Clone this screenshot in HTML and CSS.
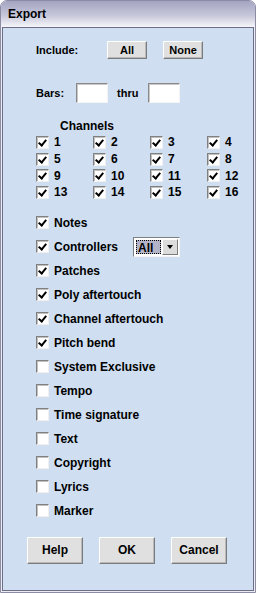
FILE: index.html
```html
<!DOCTYPE html>
<html lang="en">
<head>
    <meta charset="UTF-8">
    <title>Export</title>
    <link rel="stylesheet" href="styles.css">
</head>
<body>

<div class="window">
    <div class="titlebar">Export</div>

    <div class="panel">
        <div class="row include-row">
            <span class="label">Include:</span>
            <button class="btn small">All</button>
            <button class="btn small">None</button>
        </div>

        <div class="row bars-row">
            <span class="label">Bars:</span>
            <input class="field" type="text">
            <span class="label thru">thru</span>
            <input class="field" type="text">
        </div>

        <div class="channels-title">Channels</div>
        <div class="channels" id="channels"></div>

        <div class="options">
            <label class="check"><span class="box on"></span>Notes</label>
            <label class="check"><span class="box on"></span>Controllers
                <span class="combo"><span class="combo-value"><span class="combo-sel">All</span></span><span class="combo-arrow"></span></span>
            </label>
            <label class="check"><span class="box on"></span>Patches</label>
            <label class="check"><span class="box on"></span>Poly aftertouch</label>
            <label class="check"><span class="box on"></span>Channel aftertouch</label>
            <label class="check"><span class="box on"></span>Pitch bend</label>
            <label class="check"><span class="box"></span>System Exclusive</label>
            <label class="check"><span class="box"></span>Tempo</label>
            <label class="check"><span class="box"></span>Time signature</label>
            <label class="check"><span class="box"></span>Text</label>
            <label class="check"><span class="box"></span>Copyright</label>
            <label class="check"><span class="box"></span>Lyrics</label>
            <label class="check"><span class="box"></span>Marker</label>
        </div>

        <div class="actions">
            <button class="btn big">Help</button>
            <button class="btn big">OK</button>
            <button class="btn big">Cancel</button>
        </div>
    </div>
</div>

<script>
    // canales 1..16, todos marcados
    const grid = document.getElementById('channels');
    for (let i = 1; i <= 16; i++) {
        const item = document.createElement('label');
        item.className = 'check';
        item.innerHTML = `<span class="box on"></span>${i}`;
        grid.appendChild(item);
    }
</script>
</body>
</html>
```

FILE: styles.css
```css
body {
    margin: 0;
    background: #ffffff;
    font-family: 'Liberation Sans', Arial, sans-serif;
    font-size: 11px;
    font-weight: bold;
    color: #000;
}

.window {
    width: 256px;
    height: 593px;
    box-sizing: border-box;
    border: 1px solid #8c8ca4;
    border-radius: 7px 7px 0 0;
    background: #ececf2;
    display: flex;
    flex-direction: column;
    overflow: hidden;
}

.titlebar {
    height: 26px;
    box-sizing: border-box;
    padding: 6px 0 0 7px;
    font-size: 12px;
    background: linear-gradient(#a4a4c2, #c6c6da 55%, #f6f6fa);
}

.panel {
    flex: 1;
    margin: 0 1px 1px 1px;
    border: 1px solid #6e6e88;
    background: #cfdef0;
    padding: 0 0 0 33px;
    display: flex;
    flex-direction: column;
}

.row {
    display: flex;
    align-items: center;
}

.include-row {
    margin-top: 13px;
    height: 18px;
}

.include-row .label {
    width: 71px;
}

.include-row .btn + .btn {
    margin-left: 16px;
}

.bars-row {
    margin-top: 24px;
    height: 20px;
}

.bars-row .label {
    width: 40px;
}

.bars-row .thru {
    width: 31px;
    margin-left: 9px;
}

.field {
    width: 32px;
    height: 20px;
    box-sizing: border-box;
    margin: 0;
    padding: 0;
    background: #fff;
    border: 1px solid;
    border-color: #8a8a8a #f4f4f4 #f4f4f4 #8a8a8a;
    box-shadow: inset 1px 1px 0 #c8c8c8;
}

.btn {
    font-family: inherit;
    font-weight: bold;
    font-size: 11px;
    color: #000;
    margin: 0;
    padding: 0;
    background: #e0e0e0;
    border: 1px solid;
    border-color: #ffffff #7c7c7c #7c7c7c #ffffff;
    box-shadow: inset -1px -1px 0 #b8b8b8;
}

.btn.small {
    width: 40px;
    height: 18px;
}

.btn.big {
    width: 56px;
    height: 27px;
    font-size: 12px;
}

.channels-title {
    margin: 16px 0 0 24px;
    height: 15px;
    line-height: 15px;
    font-size: 12px;
}

.channels {
    display: grid;
    grid-template-columns: repeat(4, 57px);
    grid-auto-rows: 16.7px;
    margin-top: 0;
}

.check {
    display: flex;
    align-items: center;
    font-size: 12px;
}

.box {
    width: 13px;
    height: 13px;
    box-sizing: border-box;
    margin-right: 5px;
    background: #fff;
    border: 1px solid;
    border-color: #808080 #f0f0f0 #f0f0f0 #808080;
    box-shadow: inset 1px 1px 0 #c0c0c0;
    position: relative;
    flex: none;
}

.box.on::after {
    content: '';
    position: absolute;
    left: 3px;
    top: 1px;
    width: 3px;
    height: 6px;
    border: solid #000;
    border-width: 0 2px 2px 0;
    transform: rotate(40deg);
}

.options {
    margin-top: 10px;
    display: flex;
    flex-direction: column;
}

.options .check {
    height: 24px;
}

.combo {
    display: flex;
    margin-left: 15px;
    width: 47px;
    height: 20px;
    box-sizing: border-box;
    border: 1px solid;
    border-color: #808080 #f4f4f4 #f4f4f4 #808080;
    background: #fff;
    padding: 1px;
}

.combo-value {
    flex: 1;
    display: flex;
    align-items: center;
    padding: 1px;
}

.combo-sel {
    flex: 1;
    height: 100%;
    box-sizing: border-box;
    border: 1px dotted #000;
    background: #b4b4c8;
    line-height: 14px;
    padding-left: 1px;
    font-size: 12px;
}

.combo-arrow {
    width: 16px;
    box-sizing: border-box;
    background: #dcdcdc;
    border: 1px solid;
    border-color: #ffffff #7c7c7c #7c7c7c #ffffff;
    display: flex;
    align-items: center;
    justify-content: center;
}

.combo-arrow::after {
    content: '';
    border: 3px solid transparent;
    border-top: 4px solid #000;
    border-bottom: 0;
}

.actions {
    margin: 14px 0 0 -9px;
    display: flex;
    gap: 16px;
}
```
